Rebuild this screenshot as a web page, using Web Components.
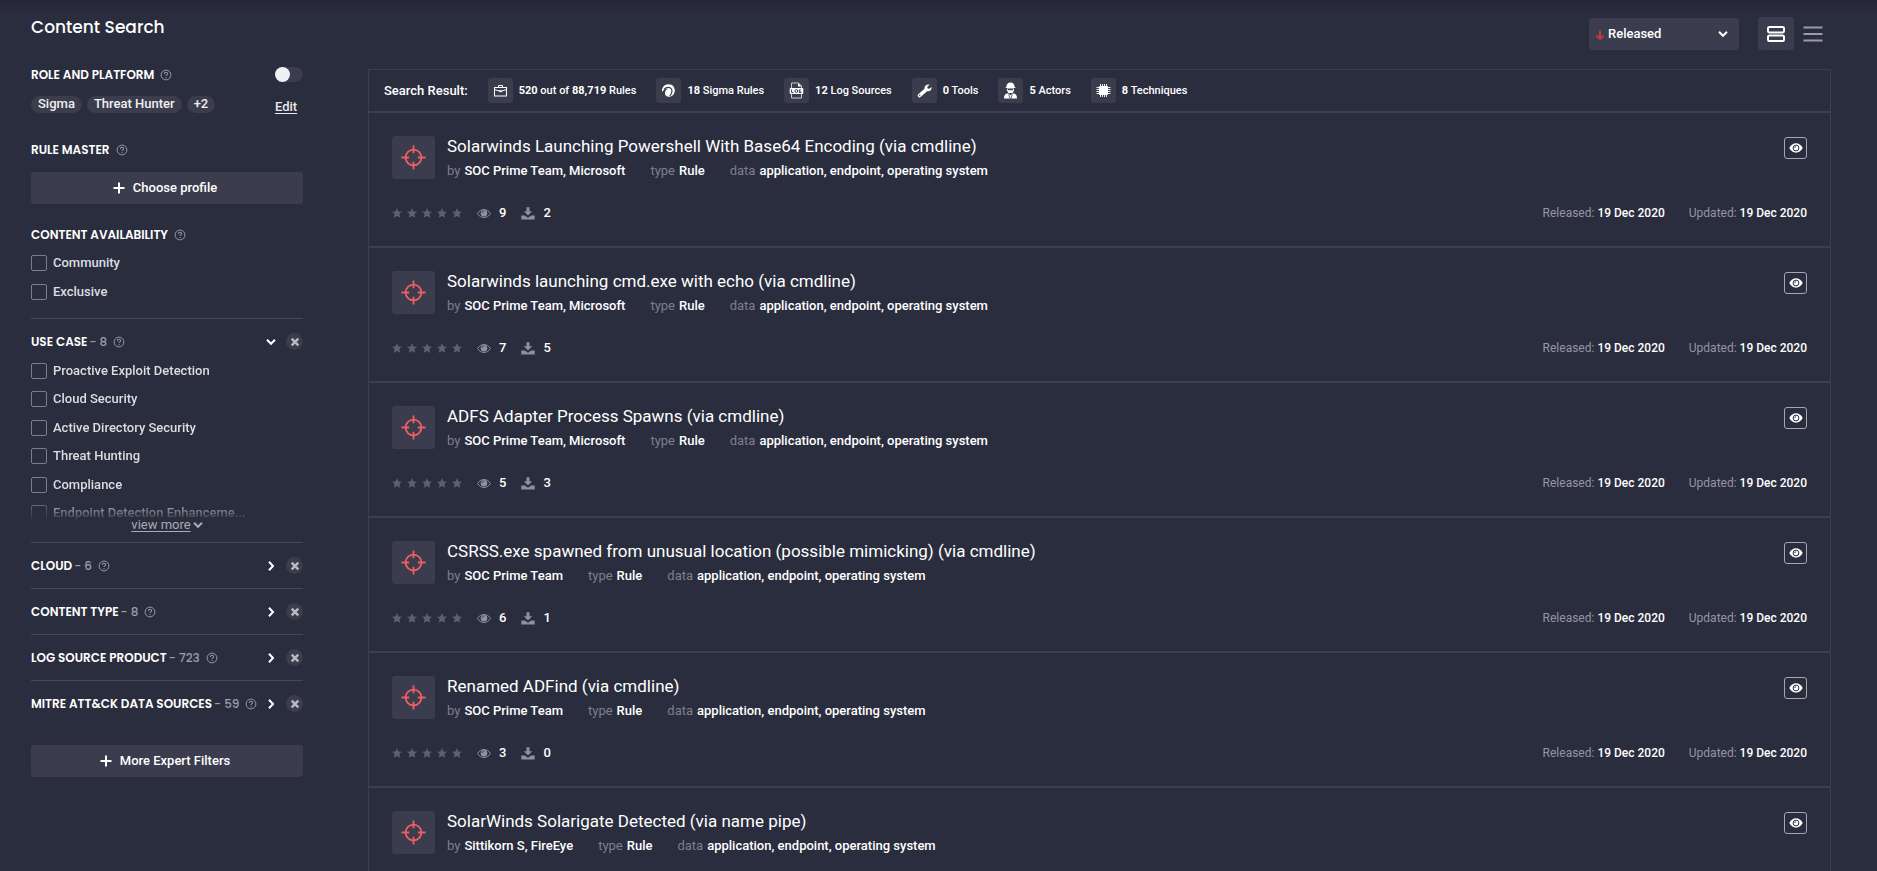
<!DOCTYPE html>
<html lang="en">
<head>
<meta charset="utf-8">
<title>Content Search</title>
<style>
  html, body { margin: 0; height: 100%; }
  body {
    background: #2a2d3d;
    color: #fff;
    font-family: Roboto, "Liberation Sans", sans-serif;
    font-size: 13px;
    line-height: 16px;
  }
</style>
</head>
<body>
<content-search></content-search>

<script>
/* ---------- shared icon set ---------- */
const ICONS = {
  help: ['0 0 12 12', '<circle cx="6" cy="6" r="4.9" fill="none" stroke="currentColor"/><path d="M4.4 4.9c0-2.1 3.2-2.1 3.2-.2 0 1.2-1.6 1.1-1.6 2.3" fill="none" stroke="currentColor" stroke-width="1.1"/><circle cx="6" cy="8.6" r=".7" fill="currentColor"/>'],
  plus: ['0 0 12 12', '<path d="M6 .5v11M.5 6h11" stroke="currentColor" stroke-width="2" fill="none"/>'],
  down: ['0 0 10 10', '<path d="M1 2.8l4 4 4-4" stroke="currentColor" stroke-width="2" fill="none"/>'],
  right: ['0 0 10 10', '<path d="M3 .8l4 4.2-4 4.2" stroke="currentColor" stroke-width="2" fill="none"/>'],
  close: ['0 0 10 10', '<path d="M1.7 1.7l6.6 6.6M8.3 1.7L1.7 8.3" stroke="currentColor" stroke-width="2.4" fill="none"/>'],
  arrow: ['0 0 10 12', '<path d="M5 2.500v8.600M1.400 7.500L5 11l3.600-3.500" stroke="currentColor" stroke-width="2" fill="none"/>'],
  cards: ['0 0 18 16', '<rect x="1" y="1" width="16" height="5.400" rx="1.300" fill="none" stroke="currentColor" stroke-width="2"/><rect x="1" y="9.600" width="16" height="5.400" rx="1.300" fill="none" stroke="currentColor" stroke-width="2"/>'],
  lines: ['0 0 20 16', '<path d="M.5 1.500h19M.5 8h19M.5 14.500h19" stroke="currentColor" stroke-width="2" fill="none"/>'],
  target: ['0 0 26 26', '<circle cx="13" cy="13" r="8.200" fill="none" stroke="currentColor" stroke-width="1.900"/><path d="M13 .5v8M13 17.500v8M.5 13h8M17.500 13h8" stroke="currentColor" stroke-width="1.900" fill="none"/>'],
  star: ['0 0 10 10', '<path d="M5 .1l1.500 3.300 3.500.3-2.600 2.400.8 3.600L5 7.900 1.800 9.700l.8-3.600L0 3.700l3.500-.3z" fill="currentColor"/>'],
  eye: ['0 0 14 10', '<path d="M.6 5C3.400-.3 10.600-.3 13.400 5 10.600 10.300 3.400 10.300.6 5z" fill="none" stroke="currentColor"/><circle cx="7" cy="4.700" r="3.300" fill="currentColor"/><path d="M5.200 4.500C5.200 3.400 6 2.700 7 2.700" stroke="#2a2d3d" stroke-width=".8" fill="none"/>'],
  eyeBold: ['0 0 14 10', '<path d="M.3 5C3.400-1.200 10.600-1.200 13.700 5 10.600 11.200 3.400 11.200.3 5z" fill="currentColor"/><circle cx="7" cy="5" r="2.900" fill="none" stroke="#2a2d3d" stroke-width="1"/><path d="M5.700 5c0-.8.500-1.300 1.300-1.300" stroke="#2a2d3d" stroke-width=".9" fill="none"/>'],
  download: ['0 0 14 13', '<path d="M5.500.3h3v3.900h2.700L7 8.400 2.800 4.200h2.700z" fill="currentColor"/><path d="M.3 8.400h3.600L7 10.700l3.100-2.300h3.600v4.100H.3z" fill="currentColor"/>'],
  briefcase: ['0 0 15 15', '<rect x="1.500" y="4.500" width="12" height="8.500" fill="none" stroke="currentColor"/><path d="M5.500 4.500V2.500h4v2M1.500 6.500l4.500 1.500h3l4.500-1.500" fill="none" stroke="currentColor"/><rect x="6.300" y="7.300" width="2.400" height="1.800" fill="currentColor"/>'],
  sigma: ['0 0 15 15', '<path d="M1.200 9C.2 4.600 3.500 1.200 7.500 1.200c3.900 0 6.400 2.900 6.300 6.300-.1 3.500-2.600 6.200-6 6.300-2.600 0-4-1.700-3.900-3.700.1-1.800 1.300-3.500 3-4.300C4.400 5.600 2.600 6.700 1.200 9z" fill="currentColor"/><path d="M3 6.200c2.800-2.500 6.800-2.300 7.700.3.700 2.200-.2 4.500-2 6.500" fill="none" stroke="#3b3d4d" stroke-width="1.200"/>'],
  log: ['0 0 15 17', '<path d="M2.500 6V1h7l3 3v2M2.500 12v4h10v-4" fill="none" stroke="#c9cad1"/><path d="M9 1l3.500 3.500H9z" fill="#fff"/><rect x=".7" y="6" width="13.600" height="6" rx="1" fill="#fff"/><path d="M2.600 7.400v3.200H4.500M11.900 7.900h-1.600v2.600h1.600V9.200" fill="none" stroke="#3b3d4d"/><circle cx="7.300" cy="9" r="1.400" fill="none" stroke="#3b3d4d"/>'],
  wrench: ['0 0 15 15', '<path d="M2.400 12.600l6.300-5.500" stroke="currentColor" stroke-width="3.400" stroke-linecap="round"/><path d="M12.600 1.700l-2.300 2 .4 1.800 1.900.3 1.800-1.900c.8 2.200-1 4.500-3.300 4.400C8.600 8.200 7.200 6.700 7.500 4.700 7.800 2.300 10.300.8 12.600 1.700z" fill="currentColor"/><circle cx="2.700" cy="12.300" r=".7" fill="#3b3d4d"/>'],
  actor: ['0 0 15 17', '<path d="M3.400 5C3.400 2 5 .5 7.500.5S11.600 2 11.600 5l1.300.9H2.100z" fill="currentColor"/><path d="M4 6.500h7v1.700L9.600 11H5.400L4 8.200z" fill="currentColor"/><path d="M4.800 7.600h5.400" stroke="#3b3d4d" stroke-width="1.200"/><path d="M1 16.500c0-3.300 1.200-4.800 4-5.200l2.500 2 2.500-2c2.800.4 4 1.900 4 5.200z" fill="currentColor"/><path d="M5.600 12.500l1.500 4M9.400 12.500l-1.500 4" stroke="#3b3d4d" stroke-width=".8"/>'],
  chip: ['0 0 15 15', '<rect x="3" y="3" width="9" height="9" rx="1" fill="currentColor"/><path d="M4.500 1v13M6.500 1v13M8.500 1v13M10.500 1v13M.5 4.500h14M.5 6.500h14M.5 8.500h14M.5 10.500h14" stroke="currentColor" stroke-width=".9"/>'],
};

/* Base class: every element owns an open shadow root with its styles and markup. */
class Base extends HTMLElement {
  connectedCallback() {
    if (this.shadowRoot) return;
    this.attachShadow({ mode: 'open' }).innerHTML =
      `<style>*{box-sizing:border-box}${this.css()}</style>${this.html()}`;
  }
  a(name) { return this.getAttribute(name) || ''; }
}

customElements.define('ui-icon', class extends Base {
  css() { return ':host{display:inline-flex;flex:none;width:12px;height:12px}svg{width:100%;height:100%;display:block}'; }
  html() {
    const [box, body] = ICONS[this.a('name')];
    return `<svg viewBox="${box}" aria-hidden="true">${body}</svg>`;
  }
});

customElements.define('side-heading', class extends Base {
  css() { return `
    :host{display:flex;align-items:center;gap:6px;height:16px}
    h2{margin:0;font:600 12px/16px Poppins,Inter,sans-serif;white-space:nowrap}
    ui-icon{color:#9495a0}`; }
  html() { return '<h2><slot></slot></h2><ui-icon name="help"></ui-icon>'; }
});

customElements.define('tag-pill', class extends Base {
  css() { return ':host{display:block;height:17px;padding:0 7px;border-radius:9px;background:#3b3d4d;line-height:16px;font-weight:500;color:#f0f0f3}'; }
  html() { return '<slot></slot>'; }
});

customElements.define('wide-button', class extends Base {
  css() { return `
    :host{display:block}
    button{width:100%;height:32px;border:0;border-radius:3px;background:#3b3c4d;color:#fff;
      font:500 13px/16px Roboto,sans-serif;display:flex;align-items:center;justify-content:center;gap:8px;padding:0 10px 0 6px}`; }
  html() { return '<button type="button"><ui-icon name="plus"></ui-icon><slot></slot></button>'; }
});

customElements.define('check-item', class extends Base {
  css() { return `
    :host{display:block}
    label{display:flex;align-items:center;gap:6px;height:16px;font-weight:500;color:#dcdde2;white-space:nowrap}
    input{appearance:none;margin:0;width:16px;height:16px;border:1px solid #7c7e8b;border-radius:2px}
    input:checked{background:#7c7e8b}`; }
  html() { return '<label><input type="checkbox"><slot></slot></label>'; }
});

customElements.define('filter-group', class extends Base {
  css() { return `
    :host{display:block;border-top:1px solid #454757}
    header{display:flex;align-items:center;height:45px;gap:6px}
    h2{display:flex;gap:2px;margin:0;font:600 12px/16px Poppins,Inter,sans-serif;white-space:nowrap}
    h2 span{font-weight:500;color:#9c9da8}
    .help{color:#9495a0}
    button{border:0;padding:0;background:none;color:#fff;display:grid;place-items:center;flex:none}
    .fold{margin-left:auto;width:10px;height:16px}
    .fold ui-icon{width:10px;height:10px}
    .clear{width:17px;height:17px;border-radius:50%;background:#3b3c4c;color:#b9bac2;margin-left:4px}
    .clear ui-icon{width:10px;height:10px}`; }
  html() { return `
    <header>
      <h2>${this.a('name')}<span>- ${this.a('count')}</span></h2>
      <ui-icon class="help" name="help"></ui-icon>
      <button class="fold" type="button" aria-label="Toggle"><ui-icon name="${this.hasAttribute('open') ? 'down' : 'right'}"></ui-icon></button>
      <button class="clear" type="button" aria-label="Clear"><ui-icon name="close"></ui-icon></button>
    </header><slot></slot>`; }
});

customElements.define('filter-sidebar', class extends Base {
  css() { return `
    :host{display:block;padding:17px 0 24px}
    h1{margin:0;font:500 17px/20px Poppins,Inter,sans-serif}
    .role{display:grid;grid-template-columns:1fr 28px;align-items:center;margin-top:30px;row-gap:10px}
    .toggle{appearance:none;margin:0;width:28px;height:15px;border-radius:8px;background:#3b3c4d;display:flex;align-self:start}
    .toggle::before{content:"";width:15px;height:15px;border-radius:50%;background:#f1f1f3}
    .toggle:checked{justify-content:flex-end}
    .tags{display:flex;gap:5px}
    a{color:#e9e9ed;font-weight:500;text-decoration:underline;text-underline-offset:2px}
    .role a{padding-top:6px}
    .master{margin-top:27px}
    .master wide-button{margin-top:14px}
    .avail{margin-top:23px;display:grid;gap:13px;margin-bottom:18px}
    .avail side-heading{margin-bottom:-1px}
    .cases{height:165px;overflow:hidden;margin-top:-1px;
      -webkit-mask-image:linear-gradient(#000 136px,transparent 158px);mask-image:linear-gradient(#000 136px,transparent 158px)}
    .list{height:158px;display:flex;flex-direction:column;justify-content:space-between}
    .more{display:flex;justify-content:center;align-items:center;gap:2px;height:16px;margin:-11px 0 9px;color:#a9aab4}
    .more a{color:#a9aab4;font-weight:400}
    .more ui-icon{width:10px;height:10px}
    .expert{margin-top:19px}`; }
  html() {
    const cases = ['Proactive Exploit Detection', 'Cloud Security', 'Active Directory Security', 'Threat Hunting', 'Compliance', 'Endpoint Detection Enhanceme...'];
    return `
    <h1>Content Search</h1>
    <section class="role">
      <side-heading>ROLE AND PLATFORM</side-heading>
      <input class="toggle" type="checkbox" role="switch" aria-label="Role and platform">
      <div class="tags"><tag-pill>Sigma</tag-pill><tag-pill>Threat Hunter</tag-pill><tag-pill>+2</tag-pill></div>
      <a href="#edit">Edit</a>
    </section>
    <section class="master">
      <side-heading>RULE MASTER</side-heading>
      <wide-button>Choose profile</wide-button>
    </section>
    <section class="avail">
      <side-heading>CONTENT AVAILABILITY</side-heading>
      <check-item>Community</check-item>
      <check-item>Exclusive</check-item>
    </section>
    <filter-group name="USE CASE" count="8" open>
      <div class="cases"><div class="list">${cases.map(c => `<check-item>${c}</check-item>`).join('')}</div></div>
      <div class="more"><a href="#more">view more</a><ui-icon name="down"></ui-icon></div>
    </filter-group>
    <filter-group name="CLOUD" count="6"></filter-group>
    <filter-group name="CONTENT TYPE" count="8"></filter-group>
    <filter-group name="LOG SOURCE PRODUCT" count="723"></filter-group>
    <filter-group name="MITRE ATT&amp;CK DATA SOURCES" count="59"></filter-group>
    <wide-button class="expert">More Expert Filters</wide-button>`;
  }
});

customElements.define('sort-select', class extends Base {
  css() { return `
    :host{display:grid;grid-template-columns:6px 10px 1fr 10px 11px;align-items:center;width:150px;height:32px;border-radius:3px;background:#3b3c4d}
    select{grid-area:1/1/2/-1;appearance:none;width:100%;height:32px;border:0;background:none;color:#fff;
      font:500 13px/16px Roboto,sans-serif;padding:0 24px 0 19px}
    ui-icon{pointer-events:none}
    .dir{grid-area:1/2;color:#c0393b;width:10px;height:12px}
    .open{grid-area:1/4;width:10px;height:10px}`; }
  html() { return `<select aria-label="Sort by"><option>Released</option><option>Updated</option></select>
    <ui-icon class="dir" name="arrow"></ui-icon><ui-icon class="open" name="down"></ui-icon>`; }
});

customElements.define('view-toolbar', class extends Base {
  css() { return `
    :host{display:flex;justify-content:flex-end;align-items:center;padding-right:8px}
    button{border:0;padding:0;background:none;color:#9a9ba6;height:33px;display:grid;place-items:center}
    .on{width:36px;border-radius:3px;background:#3b3c4d;color:#fff;margin:0 9px 0 19px}
    .on ui-icon{width:18px;height:16px}
    .list ui-icon{width:20px;height:16px}`; }
  html() { return `<sort-select></sort-select>
    <button class="on" type="button" aria-label="Card view"><ui-icon name="cards"></ui-icon></button>
    <button class="list" type="button" aria-label="List view"><ui-icon name="lines"></ui-icon></button>`; }
});

customElements.define('summary-stat', class extends Base {
  css() { return `
    :host{display:flex;align-items:center;gap:6px;font-size:11px;font-weight:500;white-space:nowrap}
    .box{width:25px;height:25px;border-radius:3px;background:#3b3d4d;display:grid;place-items:center}
    ui-icon{width:15px;height:17px}`; }
  html() { return `<span class="box"><ui-icon name="${this.a('icon')}"></ui-icon></span><span><slot></slot></span>`; }
});

customElements.define('rule-row', class extends Base {
  css() { return `
    :host{display:grid;grid-template-columns:43px 1fr auto;column-gap:12px;align-items:start;align-content:start;
      box-sizing:border-box;height:135px;padding:23px 23px 0;border-bottom:2px solid #3d3f4f}
    .thumb{width:43px;height:43px;border-radius:3px;background:#3b3c4d;color:#ee5f63;display:grid;place-items:center}
    .thumb ui-icon{width:25px;height:25px}
    h3{margin:0;font:400 17px/20px Roboto,sans-serif}
    h3 a{color:inherit;text-decoration:none}
    .text{height:43px}
    .meta{display:flex;gap:25px;margin-top:7px;font-weight:500}
    .meta span{display:flex;gap:4px}
    i{font-style:normal;font-weight:400;color:#7d7f8c}
    .watch{width:23px;height:22px;margin-top:1px;padding:0;border:1px solid #a5a6af;border-radius:3px;background:none;color:#fff;display:grid;place-items:center}
    .watch ui-icon{width:14px;height:10px}
    footer{grid-column:1/-1;display:flex;align-items:center;height:16px;margin-top:26px;font-weight:500}
    .stars{display:flex;gap:5px;color:#5e606e;margin-right:15px}
    .stars ui-icon{width:10px;height:10px}
    .count{display:flex;align-items:center;gap:8px;margin-right:15px}
    .count ui-icon{width:14px;height:13px;color:#8f909b}
    .dates{margin-left:auto;display:flex;gap:24px;font-size:12px}
    .dates i{color:#9596a1}`; }
  html() { return `
    <span class="thumb"><ui-icon name="target"></ui-icon></span>
    <div class="text">
      <h3><a href="#rule"><slot></slot></a></h3>
      <div class="meta"><span><i>by</i>${this.a('by')}</span><span><i>type</i>Rule</span><span><i>data</i>application, endpoint, operating system</span></div>
    </div>
    <button class="watch" type="button" aria-label="Preview"><ui-icon name="eyeBold"></ui-icon></button>
    <footer>
      <span class="stars">${'<ui-icon name="star"></ui-icon>'.repeat(5)}</span>
      <span class="count"><ui-icon name="eye"></ui-icon>${this.a('views')}</span>
      <span class="count"><ui-icon name="download"></ui-icon>${this.a('downloads')}</span>
      <span class="dates"><span><i>Released:</i> 19 Dec 2020</span><span><i>Updated:</i> 19 Dec 2020</span></span>
    </footer>`; }
});

customElements.define('result-panel', class extends Base {
  css() { return `
    :host{display:block;border:1px solid #3d3f4f;border-bottom:0}
    .summary{display:flex;align-items:center;gap:20px;height:43px;padding-left:15px;border-bottom:2px solid #3d3f4f}
    .lead{font-weight:500;white-space:nowrap}
    b{font-weight:700}`; }
  html() { return `
    <div class="summary">
      <span class="lead">Search Result:</span>
      <summary-stat icon="briefcase"><b>520</b> out of <b>88,719</b> Rules</summary-stat>
      <summary-stat icon="sigma"><b>18</b> Sigma Rules</summary-stat>
      <summary-stat icon="log"><b>12</b> Log Sources</summary-stat>
      <summary-stat icon="wrench"><b>0</b> Tools</summary-stat>
      <summary-stat icon="actor"><b>5</b> Actors</summary-stat>
      <summary-stat icon="chip"><b>8</b> Techniques</summary-stat>
    </div>
    <slot></slot>`; }
});

customElements.define('content-search', class extends Base {
  css() { return `
    :host{display:grid;grid-template-columns:272px minmax(0,1fr);column-gap:65px;align-items:start;
      height:100vh;padding:0 46px 0 31px;box-sizing:border-box;overflow-y:auto;scrollbar-width:none;
      background:linear-gradient(#262838,#2a2d3d 14px)}
    view-toolbar{margin-top:17px;margin-bottom:19px}`; }
  html() {
    const rules = [
      ['Solarwinds Launching Powershell With Base64 Encoding (via cmdline)', 'SOC Prime Team, Microsoft', 9, 2],
      ['Solarwinds launching cmd.exe with echo (via cmdline)', 'SOC Prime Team, Microsoft', 7, 5],
      ['ADFS Adapter Process Spawns (via cmdline)', 'SOC Prime Team, Microsoft', 5, 3],
      ['CSRSS.exe spawned from unusual location (possible mimicking) (via cmdline)', 'SOC Prime Team', 6, 1],
      ['Renamed ADFind (via cmdline)', 'SOC Prime Team', 3, 0],
      ['SolarWinds Solarigate Detected (via name pipe)', 'Sittikorn S, FireEye', 4, 1],
    ];
    return `
    <filter-sidebar></filter-sidebar>
    <main>
      <view-toolbar></view-toolbar>
      <result-panel>${rules.map(([t, by, v, d]) => `<rule-row by="${by}" views="${v}" downloads="${d}">${t}</rule-row>`).join('')}</result-panel>
    </main>`;
  }
});
</script>
</body>
</html>
